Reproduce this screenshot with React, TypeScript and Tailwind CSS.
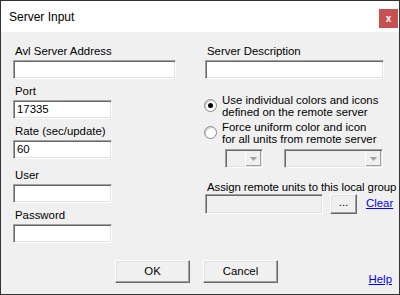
import React from 'react';

const sunken =
    'border border-t-[#a0a0a0] border-l-[#a0a0a0] border-b-white border-r-white shadow-[inset_1px_1px_0_#696969,inset_-1px_-1px_0_#e3e3e3]';
const raised =
    'border border-t-white border-l-white border-b-[#696969] border-r-[#696969] shadow-[inset_-1px_-1px_0_#a0a0a0,inset_1px_1px_0_#e3e3e3] bg-[#f0f0f0]';

const Field: React.FC<{ label: string; value?: string; width: string; gap?: string }> = ({ label, value, width, gap }) => (
    <div className={gap ?? 'mt-[5px]'}>
        <div className="h-[14px] leading-[14px] pl-[2px] whitespace-nowrap">{label}</div>
        <div className={`mt-[2px] h-[19px] bg-white ${sunken} ${width} flex items-center pl-[3px] leading-none`}>{value}</div>
    </div>
);

const Radio: React.FC<{ checked?: boolean; lines: string[]; gap: string }> = ({ checked, lines, gap }) => (
    <div className={`flex ml-[-1px] ${gap}`}>
        <div className="mt-[5px] w-[13px] h-[13px] shrink-0 rounded-full border border-[#8a8a8a] bg-white flex items-center justify-center shadow-[inset_1px_1px_1px_#c8c8c8]">
            {checked && <div className="w-[5px] h-[5px] rounded-full bg-black"></div>}
        </div>
        <div className="ml-[5px] leading-[12px] whitespace-nowrap">
            {lines.map((l) => (
                <div key={l}>{l}</div>
            ))}
        </div>
    </div>
);

const Combo: React.FC<{ width: string }> = ({ width }) => (
    <div className={`h-[19px] ${width} ${sunken} bg-[#f0f0f0] flex justify-end p-[1px]`}>
        <div className="w-[16px] h-full border-l border-white flex items-center justify-center bg-[#f0f0f0] shadow-[inset_-1px_-1px_0_#a0a0a0]">
            <svg width="7" height="4" viewBox="0 0 7 4">
                <path d="M0 0h7L3.5 4z" fill="#a0a0a0" />
            </svg>
        </div>
    </div>
);

export default function App() {
    return (
        <div className="w-[400px] h-[295px] border border-[#333] flex flex-col text-[11.4px] text-black" style={{ fontFamily: '"Liberation Sans", Arial, sans-serif' }}>
            {/* Title bar */}
            <div className="h-[31px] bg-white flex justify-between">
                <span className="pl-[8px] pt-[9px] text-[12px] leading-[14px]">Server Input</span>
                <div className="mt-[8px] mr-[1px] w-[19px] h-[19px] bg-[#c75050] text-white font-bold text-[10px] flex items-center justify-center leading-none">x</div>
            </div>

            {/* Body */}
            <div className="flex-1 bg-[#f0f0f0] pt-[12px]">
                <div className="flex pl-[12px]">
                    {/* Left column */}
                    <div className="w-[163px]">
                        <Field label="Avl Server Address" width="w-[163px]" gap="mt-0" />
                        <Field label="Port" value="17335" width="w-[99px]" />
                        <Field label="Rate (sec/update)" value="60" width="w-[99px]" />
                        <Field label="User" width="w-[99px]" gap="mt-[9px]" />
                        <Field label="Password" width="w-[99px]" />
                    </div>

                    {/* Right column */}
                    <div className="ml-[29px] w-[182px]">
                        <Field label="Server Description" width="w-[179px]" gap="mt-0" />
                        <Radio checked gap="mt-[15px]" lines={['Use individual colors and icons', 'defined on the remote server']} />
                        <Radio gap="mt-[3px]" lines={['Force uniform color and icon', 'for all units from remote server']} />
                        <div className="flex mt-[4px] ml-[20px] gap-[21px]">
                            <Combo width="w-[38px]" />
                            <Combo width="w-[99px]" />
                        </div>
                        <div className="mt-[12px] h-[14px] leading-[14px] pl-[2px] whitespace-nowrap tracking-[-0.08px]">Assign remote units to this local group</div>
                        <div className="flex items-center">
                            <div className={`h-[20px] w-[118px] shrink-0 bg-[#f0f0f0] ${sunken}`}></div>
                            <button className={`ml-[7px] h-[20px] w-[27px] shrink-0 ${raised} leading-none pb-[2px]`}>...</button>
                            <a className="ml-[9px] text-[#0000ff] underline cursor-pointer">Clear</a>
                        </div>
                    </div>
                </div>

                {/* Buttons */}
                <div className="flex items-start mt-[17px] pl-[114px] pr-[7px]">
                    <button className={`w-[75px] h-[23px] ${raised}`}>OK</button>
                    <button className={`ml-[13px] w-[75px] h-[23px] ${raised}`}>Cancel</button>
                    <a className="ml-auto mt-[12px] text-[#0000ff] underline leading-[14px] cursor-pointer">Help</a>
                </div>
            </div>
        </div>
    );
}
